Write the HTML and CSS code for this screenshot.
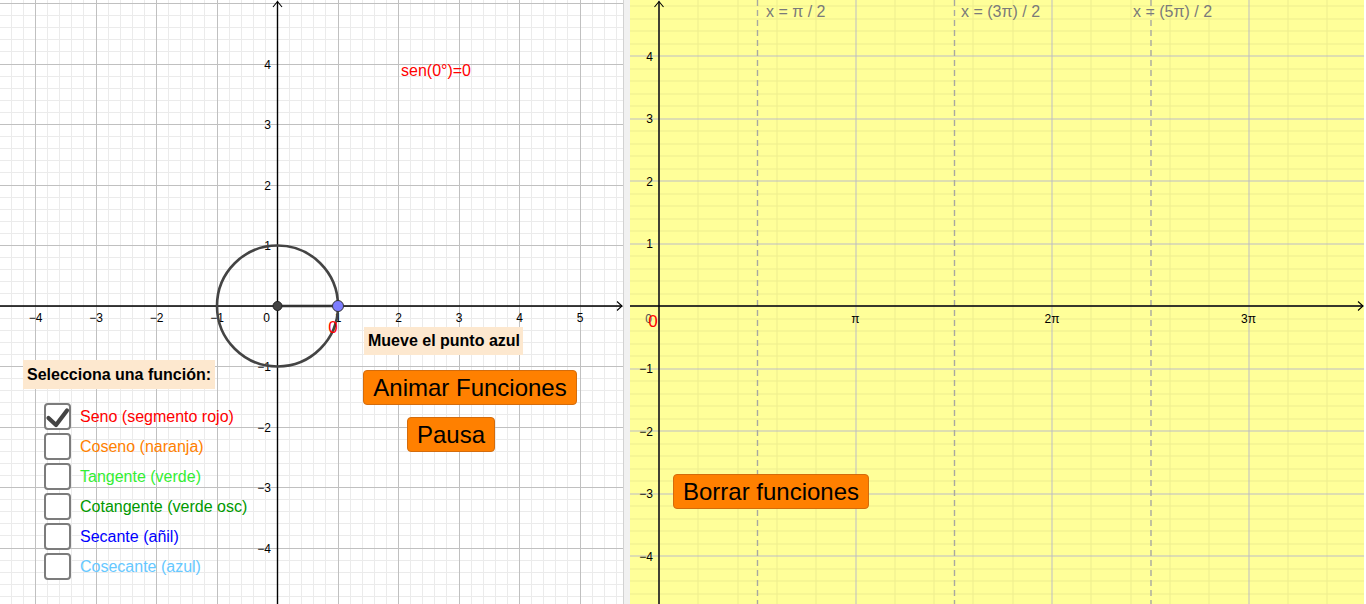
FILE: index.html
```html
<!DOCTYPE html>
<html lang="es">
<head>
  <meta charset="UTF-8">
  <title>Funciones trigonométricas</title>
  <link rel="stylesheet" href="styles.css">
</head>
<body>

<div class="app">

  <!-- vista gráfica 1: circunferencia unitaria -->
  <section class="view view-left">
    <svg class="plane" width="623" height="604" viewBox="0 0 623 604">
      <defs>
        <pattern id="gridL" patternUnits="userSpaceOnUse" x="35" y="3" width="121" height="121">
          <path class="minor" d="M12.6 0V121M24.7 0V121M36.8 0V121M48.9 0V121M73.1 0V121M85.2 0V121M97.3 0V121M109.4 0V121M0 12.6H121M0 24.7H121M0 36.8H121M0 48.9H121M0 73.1H121M0 85.2H121M0 97.3H121M0 109.4H121"/>
          <path class="major" d="M0.5 0V121M61 0V121M0 0.5H121M0 61H121"/>
        </pattern>
      </defs>
      <rect width="623" height="604" fill="url(#gridL)"/>

      <path class="axis" d="M0 306H622M277.5 604V1.5"/>
      <path class="arrow" d="M273 7L277.5 1.5L282 7M617 301.5L622 306L617 310.5"/>

      <g class="ticks">
        <text x="35.5" y="322">−4</text>
        <text x="96" y="322">−3</text>
        <text x="156.5" y="322">−2</text>
        <text x="217" y="322">−1</text>
        <text x="338" y="322">1</text>
        <text x="398.5" y="322">2</text>
        <text x="459" y="322">3</text>
        <text x="519.5" y="322">4</text>
        <text x="580" y="322">5</text>
      </g>
      <g class="ticks ticks-y">
        <text x="270" y="322">0</text>
        <text x="271" y="68.5">4</text>
        <text x="271" y="129">3</text>
        <text x="271" y="189.5">2</text>
        <text x="271" y="250">1</text>
        <text x="271" y="371">−1</text>
        <text x="271" y="431.5">−2</text>
        <text x="271" y="492">−3</text>
        <text x="271" y="552.5">−4</text>
      </g>

      <circle class="unit-circle" cx="277.5" cy="306" r="60.5"/>
      <path class="radius" d="M277.5 306H338"/>
      <circle class="pt-origin" cx="277.5" cy="306" r="4.5"/>
      <circle class="pt-blue" cx="338" cy="306" r="5.5"/>
      <text class="red-label" x="333" y="333">0</text>
      <text class="red-text" x="401" y="76">sen(0°)=0</text>
    </svg>

    <div class="note note-mueve">Mueve el punto azul</div>
    <div class="note note-select">Selecciona una función:</div>

    <ul class="checks">
      <li class="c-seno">
        <span class="box"><svg width="27" height="27" viewBox="0 0 27 27"><path d="M4.5 15L12 22L23 7.5"/></svg></span>
        Seno (segmento rojo)
      </li>
      <li class="c-coseno"><span class="box"></span>Coseno (naranja)</li>
      <li class="c-tangente"><span class="box"></span>Tangente (verde)</li>
      <li class="c-cotangente"><span class="box"></span>Cotangente (verde osc)</li>
      <li class="c-secante"><span class="box"></span>Secante (añil)</li>
      <li class="c-cosecante"><span class="box"></span>Cosecante (azul)</li>
    </ul>

    <button class="ggb-btn btn-animar">Animar Funciones</button>
    <button class="ggb-btn btn-pausa">Pausa</button>
  </section>

  <div class="divider"></div>

  <!-- vista gráfica 2: funciones -->
  <section class="view view-right">
    <svg class="plane" width="734" height="604" viewBox="0 0 734 604">
      <defs>
        <pattern id="gridR" patternUnits="userSpaceOnUse" x="28.5" y="55.5" width="393" height="125">
          <path class="minor" d="M39.8 0V125M79.1 0V125M118.4 0V125M157.7 0V125M236.3 0V125M275.6 0V125M314.9 0V125M354.2 0V125M0 13H393M0 25.5H393M0 38H393M0 50.5H393M0 75.5H393M0 88H393M0 100.5H393M0 113H393"/>
          <path class="major" d="M0.5 0V125M197 0V125M0 0.5H393M0 63H393"/>
        </pattern>
      </defs>
      <rect width="734" height="604" fill="url(#gridR)"/>

      <path class="asymptote" d="M127.5 0V604M324.5 0V604M521 0V604"/>
      <text class="asym-label" x="136" y="17">x = π / 2</text>
      <text class="asym-label" x="331" y="17">x = (3π) / 2</text>
      <text class="asym-label" x="503" y="17">x = (5π) / 2</text>

      <path class="axis" d="M0 306H733M29 604V1.5"/>
      <path class="arrow" d="M24.5 7L29 1.5L33.5 7M728 301.5L733 306L728 310.5"/>

      <g class="ticks">
        <text x="225.5" y="323">π</text>
        <text x="422" y="323">2π</text>
        <text x="618.5" y="323">3π</text>
      </g>
      <g class="ticks ticks-y">
        <text class="zero-gray" x="22" y="323">0</text>
        <text x="23" y="60.5">4</text>
        <text x="23" y="123">3</text>
        <text x="23" y="185.5">2</text>
        <text x="23" y="248">1</text>
        <text x="23" y="373">−1</text>
        <text x="23" y="435.5">−2</text>
        <text x="23" y="498">−3</text>
        <text x="23" y="560.5">−4</text>
      </g>
      <text class="red-label" x="23" y="327">0</text>
    </svg>

    <button class="ggb-btn btn-borrar">Borrar funciones</button>
  </section>

</div>

</body>
</html>
```

FILE: styles.css
```css
body { margin: 0; background: #fff; font-family: "Liberation Sans", Arial, sans-serif; }

.app { display: flex; height: 604px; }

.view { position: relative; height: 604px; overflow: hidden; flex: none; }
.view-left { width: 623px; background: #fff; }
.view-right { width: 734px; background: #ffff99; }
.divider { width: 7px; flex: none; background: #f1f1f1; border-left: 1px solid #d2d2d2; box-sizing: border-box; }

.plane { display: block; }
.plane .minor { stroke: #ebebeb; stroke-width: 1; fill: none; shape-rendering: crispEdges; }
.plane .major { stroke: #c0c0c0; stroke-width: 1; fill: none; shape-rendering: crispEdges; }
.view-right .plane .minor { stroke: #000; stroke-opacity: 0.07; }
.view-right .plane .major { stroke: #bcbcc4; }

.axis { stroke: #000; stroke-width: 1.4; fill: none; }
.arrow { stroke: #000; stroke-width: 1.1; fill: none; }

.ticks text { font-size: 12px; fill: #000; text-anchor: middle; }
.ticks-y text { text-anchor: end; }
.ticks .zero-gray { fill: #555; }

.unit-circle { fill: none; stroke: #444; stroke-width: 2.6; }
.radius { stroke: #333; stroke-width: 2.6; }
.pt-origin { fill: #444; stroke: #222; stroke-width: 1; }
.pt-blue { fill: #7d7dff; stroke: #333; stroke-width: 1; }

.red-label { font-size: 17px; fill: #ff0000; text-anchor: middle; }
.red-text { font-size: 16px; fill: #ff0000; }

.asymptote { stroke: #a8a8a0; stroke-width: 1.4; stroke-dasharray: 6 4; fill: none; }
.asym-label { font-size: 16px; fill: #7a7a7a; }

.note {
  position: absolute; background: #fde8cf; color: #000;
  font-weight: bold; font-size: 16px; line-height: 20px; white-space: nowrap;
}
.note-select { left: 23px; top: 360px; padding: 5px 4px 4px; }
.note-mueve { left: 364px; top: 327px; padding: 4px 3px 4px 4px; }

.checks {
  position: absolute; left: 44px; top: 403px;
  margin: 0; padding: 0; list-style: none;
  display: flex; flex-direction: column; gap: 3px;
}
.checks li { display: flex; align-items: center; height: 27px; font-size: 16px; line-height: 18px; }
.checks .box {
  width: 27px; height: 27px; box-sizing: border-box; margin-right: 9px; flex: none;
  border: 2px solid #7c7c7c; border-radius: 4px; background: #fff;
  display: flex; align-items: center; justify-content: center;
}
.checks .box svg { display: block; margin: -2px; flex: none; }
.checks .box path { fill: none; stroke: #444; stroke-width: 4.2; stroke-linecap: round; stroke-linejoin: round; }
.c-seno { color: #ff0000; }
.c-coseno { color: #ff7f00; }
.c-tangente { color: #33ee33; }
.c-cotangente { color: #009900; }
.c-secante { color: #0000ff; }
.c-cosecante { color: #66c8ff; }

.ggb-btn {
  position: absolute; height: 35px; padding: 0; box-sizing: border-box;
  background: #ff8000; border: 1px solid #d46c0c; border-radius: 4px;
  color: #000; font-family: "Liberation Sans", Arial, sans-serif; font-size: 24px;
  text-align: center; cursor: pointer;
}
.btn-animar { left: 363px; top: 370px; width: 214px; }
.btn-pausa { left: 407px; top: 417px; width: 88px; }
.btn-borrar { left: 43px; top: 474px; width: 196px; }
```
